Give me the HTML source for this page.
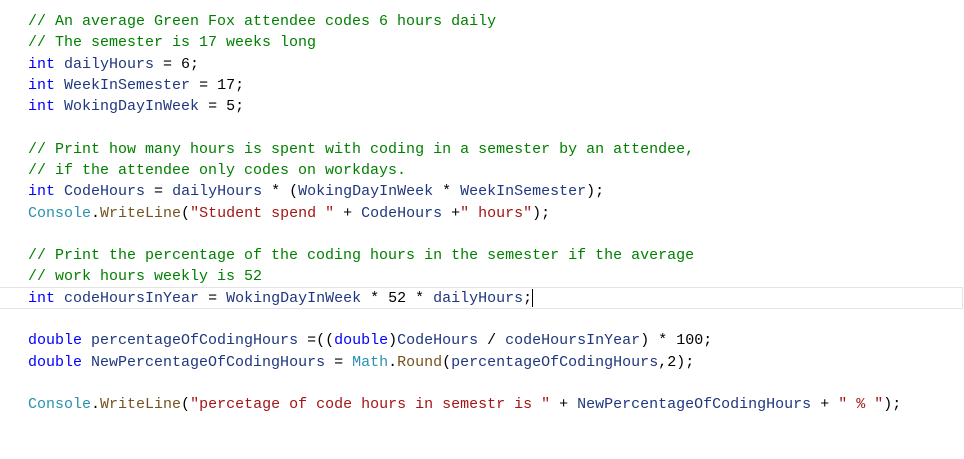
<!DOCTYPE html>
<html><head><style>
html,body{margin:0;padding:0;background:#fff;width:964px;height:459px;overflow:hidden}
pre{margin:0;position:absolute;left:28px;top:11px;font-family:"Liberation Mono",monospace;font-size:15px;line-height:21.28px;color:#000}
.c{color:#008000}.k{color:#0000ff}.v{color:#1f377f}.t{color:#2b91af}.m{color:#74531f}.s{color:#a31515}
.cur{position:absolute;left:0;top:287px;width:962px;height:20px;border:1px solid #e4e4e4;border-left:none}
.caret{position:absolute;left:532px;top:289px;width:1px;height:18px;background:#000}
</style></head><body>
<div class="cur"></div>
<pre><span class="c">// An average Green Fox attendee codes 6 hours daily</span>
<span class="c">// The semester is 17 weeks long</span>
<span class="k">int</span> <span class="v">dailyHours</span> = 6;
<span class="k">int</span> <span class="v">WeekInSemester</span> = 17;
<span class="k">int</span> <span class="v">WokingDayInWeek</span> = 5;

<span class="c">// Print how many hours is spent with coding in a semester by an attendee,</span>
<span class="c">// if the attendee only codes on workdays.</span>
<span class="k">int</span> <span class="v">CodeHours</span> = <span class="v">dailyHours</span> * (<span class="v">WokingDayInWeek</span> * <span class="v">WeekInSemester</span>);
<span class="t">Console</span>.<span class="m">WriteLine</span>(<span class="s">"Student spend "</span> + <span class="v">CodeHours</span> +<span class="s">" hours"</span>);

<span class="c">// Print the percentage of the coding hours in the semester if the average</span>
<span class="c">// work hours weekly is 52</span>
<span class="k">int</span> <span class="v">codeHoursInYear</span> = <span class="v">WokingDayInWeek</span> * 52 * <span class="v">dailyHours</span>;

<span class="k">double</span> <span class="v">percentageOfCodingHours</span> =((<span class="k">double</span>)<span class="v">CodeHours</span> / <span class="v">codeHoursInYear</span>) * 100;
<span class="k">double</span> <span class="v">NewPercentageOfCodingHours</span> = <span class="t">Math</span>.<span class="m">Round</span>(<span class="v">percentageOfCodingHours</span>,2);

<span class="t">Console</span>.<span class="m">WriteLine</span>(<span class="s">"percetage of code hours in semestr is "</span> + <span class="v">NewPercentageOfCodingHours</span> + <span class="s">" % "</span>);</pre>
<div class="caret"></div>
</body></html>
